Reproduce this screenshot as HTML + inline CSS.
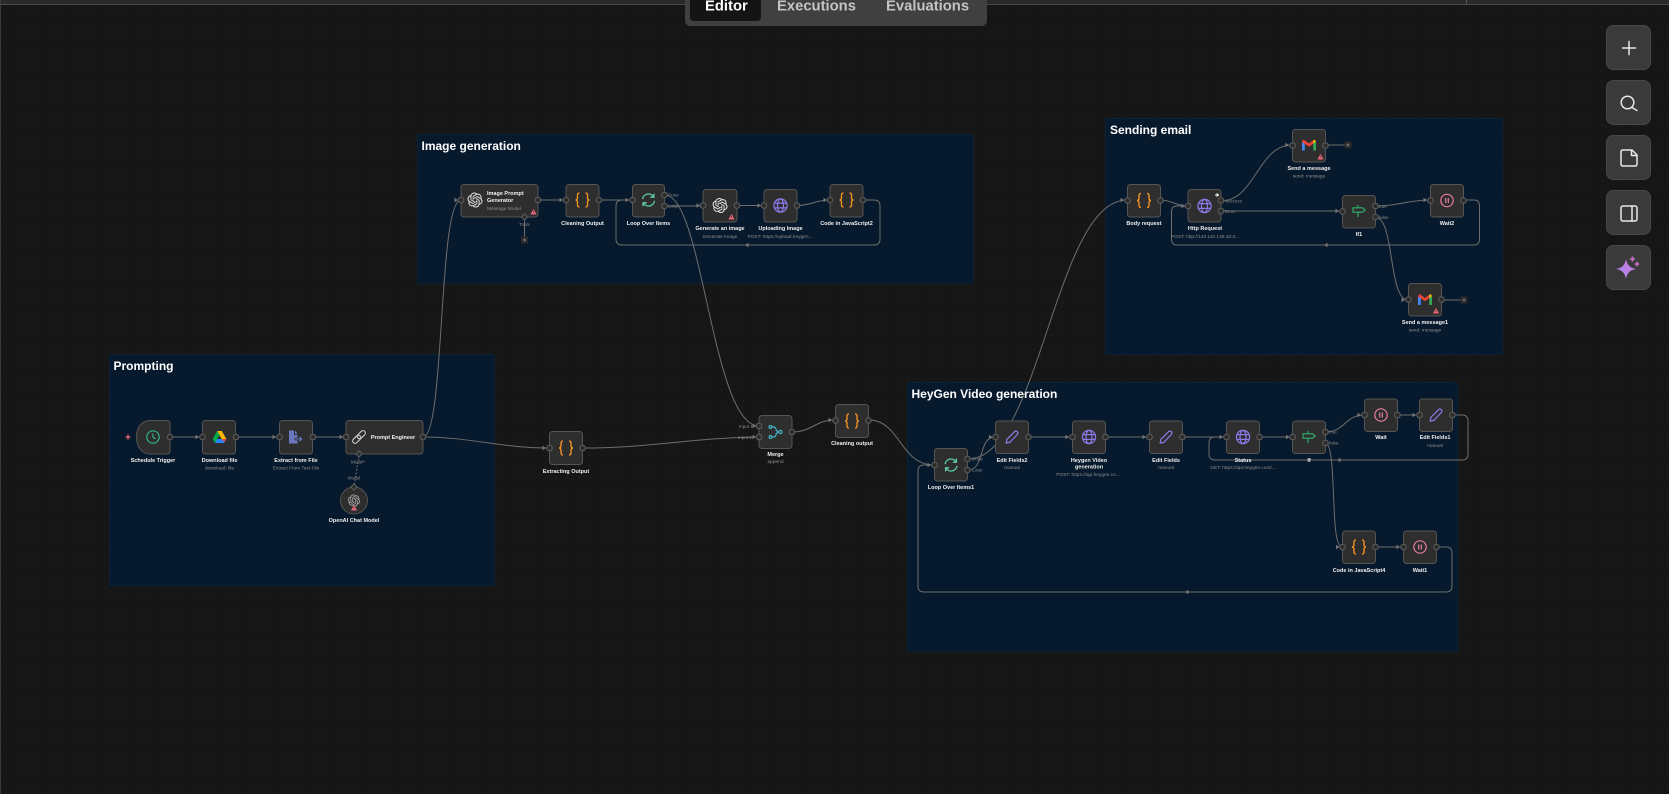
<!DOCTYPE html>
<html><head><meta charset="utf-8"><title>Workflow editor</title>
<style>
html,body{margin:0;padding:0;background:#161616;width:1669px;height:794px;overflow:hidden}
svg{display:block;position:absolute;left:0;top:0}
text{font-family:"Liberation Sans",sans-serif}
.t{font-size:12px;font-weight:700;fill:#fff}
.l{font-size:5.500px;font-weight:700;fill:#f0f0f0;text-anchor:middle}
.s{font-size:4.800px;fill:#8f8f8f;text-anchor:middle}
.b{font-size:4.500px;fill:#8a8a8a}
.tab{font-size:14.800px;font-weight:700;fill:#c4c4c4}
.e{fill:none;stroke:#6e6e6e;stroke-width:1}
.n{fill:#2e2e2e;stroke:#555;stroke-width:1}
.f{fill:#07192c;stroke:#0c2237;stroke-width:1}
.p{fill:#2c2c2c;stroke:#5e5e5e;stroke-width:1}
.btn{fill:#3a3a3a;stroke:#484848;stroke-width:1}
</style></head><body>
<svg width="1669" height="794" viewBox="0 0 1669 794" xmlns="http://www.w3.org/2000/svg">
<defs>
<pattern id="dots" x="6" y="4" width="11" height="11" patternUnits="userSpaceOnUse"><circle cx=".6" cy=".6" r=".6" fill="#262626"/></pattern>
<linearGradient id="spk" x1="0" y1="1" x2="1" y2="0"><stop offset="0" stop-color="#9f86f5"/><stop offset="1" stop-color="#d67ad8"/></linearGradient>
<path id="ar" d="M-3.5 -2.2L0 0L-3.5 2.2Z" fill="#777"/>
<path id="al" d="M3.5 -2.2L0 0L3.5 2.2Z" fill="#777"/>
<g id="code" fill="none" stroke="#ff9a1f" stroke-width="1.3"><path d="M-3 -7C-5 -7 -5 -6 -5 -4V-2C-5 -1 -6 0 -7 0C-6 0 -5 1 -5 2V4C-5 6 -5 7 -3 7"/><path d="M3 -7C5 -7 5 -6 5 -4V-2C5 -1 6 0 7 0C6 0 5 1 5 2V4C5 6 5 7 3 7"/></g>
<g id="globe" fill="none" stroke="#8a7bea" stroke-width="1.2"><circle r="6.6"/><ellipse rx="3" ry="6.6"/><path d="M-6.2 -2.4H6.2M-6.2 2.4H6.2"/></g>
<path id="pen" fill="none" stroke="#8a7bea" stroke-width="1.2" d="M-5.8 6L-5.2 2.5L2.5 -5.3C4.5 -7 7 -4.5 5.3 -2.5L-2.2 5.4Z"/>
<g id="sync" fill="none" stroke="#5fd0ae" stroke-width="1.3"><path d="M-6 -.8A6 6 0 0 1 5 -3.2M5.4 -6.4V-2.8H1.8"/><path d="M6 .8A6 6 0 0 1 -5 3.2M-5.4 6.4V2.8H-1.8"/></g>
<g id="wait" fill="none" stroke="#e57c9c" stroke-width="1.2"><circle r="6.2"/><path d="M-1.3 -2.5V2.5M1.3 -2.5V2.5"/></g>
<g id="if" fill="none" stroke="#2fb56f" stroke-width="1.1"><path d="M-6 -3.200H3.500L6.200 -1L3.500 1.200H-6Z"/><path d="M-1 -6V-3.200M-1 1.200V6"/></g>
<g id="clock" fill="none" stroke="#2eb88a" stroke-width="1.2"><circle r="6.2"/><path d="M0 -3.5V0L2.5 2"/></g>
<g id="ext"><path fill="#6a78c0" d="M-7 -6.5H-2V-2H1.5V6.5H-7Z"/><path fill="#6a78c0" d="M-1 -6.5L1.5 -3H-1Z"/><path fill="none" stroke="#2e2e2e" stroke-width="2.6" d="M-1.5 2H4"/><path fill="none" stroke="#6a78c0" stroke-width="1.1" d="M-1 2H5.5M3.4 -.2L5.7 2L3.4 4.2"/></g>
<g id="link" fill="none" stroke="#d0d0d0" stroke-width="1.1" transform="rotate(-45)"><rect x="-8" y="-2.4" width="9.500" height="4.800" rx="2.400"/><rect x="-1.500" y="-2.400" width="9.500" height="4.800" rx="2.400"/></g>
<g id="merge" fill="none" stroke="#45b5c8" stroke-width="1.2"><circle cx="-5" cy="-5" r="1.4"/><circle cx="-5" cy="5" r="1.4"/><circle cx="5" cy="0" r="1.6"/><path d="M-3.5 -5H-1.5C1 -5 0 0 3.4 0C0 0 1 5 -1.5 5H-3.5"/></g>
<path id="ai" transform="translate(-7.500 -7.500) scale(.625)" fill="#e8e8e8" d="M22.2819 9.8211a5.9847 5.9847 0 0 0-.5157-4.9108 6.0462 6.0462 0 0 0-6.5098-2.9A6.0651 6.0651 0 0 0 4.9807 4.1818a5.9847 5.9847 0 0 0-3.9977 2.9 6.0462 6.0462 0 0 0 .7427 7.0966 5.98 5.98 0 0 0 .511 4.9107 6.051 6.051 0 0 0 6.5146 2.9001A5.9847 5.9847 0 0 0 13.2599 24a6.0557 6.0557 0 0 0 5.7718-4.2058 5.9894 5.9894 0 0 0 3.9977-2.9001 6.0557 6.0557 0 0 0-.7475-7.0729zm-9.022 12.6081a4.4755 4.4755 0 0 1-2.8764-1.0408l.1419-.0804 4.7783-2.7582a.7948.7948 0 0 0 .3927-.6813v-6.7369l2.02 1.1686a.071.071 0 0 1 .038.052v5.5826a4.504 4.504 0 0 1-4.4945 4.4944zm-9.6607-4.1254a4.4708 4.4708 0 0 1-.5346-3.0137l.142.0852 4.783 2.7582a.7712.7712 0 0 0 .7806 0l5.8428-3.3685v2.3324a.0804.0804 0 0 1-.0332.0615L9.74 19.9502a4.4992 4.4992 0 0 1-6.1408-1.6464zM2.3408 7.8956a4.485 4.485 0 0 1 2.3655-1.9728V11.6a.7664.7664 0 0 0 .3879.6765l5.8144 3.3543-2.0201 1.1685a.0757.0757 0 0 1-.071 0l-4.8303-2.7865A4.504 4.504 0 0 1 2.3408 7.872zm16.5963 3.8558L13.1038 8.364 15.1192 7.2a.0757.0757 0 0 1 .071 0l4.8303 2.7913a4.4944 4.4944 0 0 1-.6765 8.1042v-5.6772a.79.79 0 0 0-.407-.667zm2.0107-3.0231l-.142-.0852-4.7735-2.7818a.7759.7759 0 0 0-.7854 0L9.409 9.2297V6.8974a.0662.0662 0 0 1 .0284-.0615l4.8303-2.7866a4.4992 4.4992 0 0 1 6.6802 4.66zM8.3065 12.863l-2.02-1.1638a.0804.0804 0 0 1-.038-.0567V6.0742a4.4992 4.4992 0 0 1 7.3757-3.4537l-.142.0805L8.704 5.459a.7948.7948 0 0 0-.3927.6813zm1.0976-2.3654l2.602-1.4998 2.6069 1.4998v2.9994l-2.5974 1.4997-2.6067-1.4997Z"/>
<g id="drive"><polygon fill="#ffba00" points="-2.3,-6 2.3,-6 6.8,2 2.2,2"/><polygon fill="#00ac47" points="-2.3,-6 -6.8,2 -4.5,6 0,-2"/><polygon fill="#2684fc" points="-4.5,6 4.5,6 6.8,2 -2.2,2"/><polygon fill="#ea4335" points="2.2,2 6.8,2 5.4,4.4 3.4,4"/></g>
<g id="gmail"><rect x="-7" y="-3.5" width="2.8" height="9" rx=".6" fill="#4285f4"/><rect x="4.2" y="-3.5" width="2.8" height="9" rx=".6" fill="#34a853"/><polygon fill="#ea4335" points="-7,-3.5 -5.5,-5.5 0,-1.5 4.2,-4.6 4.2,-1.4 0,1.8 -7,-3"/><polygon fill="#fbbc04" points="4.2,-4.6 5.5,-5.5 7,-3.5 4.2,-1.4"/></g>
<g id="warn"><path d="M0 -2.6L2.7 2.2H-2.7Z" fill="#e8657a" stroke="#e8657a" stroke-width=".5" stroke-linejoin="round"/><path d="M0 -1V.8" stroke="#2e2e2e" stroke-width=".6"/></g>
<g id="plusbox"><rect x="-3.5" y="-3.5" width="7" height="7" rx="1" fill="#2b2b2b"/><path d="M-1.5 0H1.5M0 -1.5V1.5" stroke="#999" stroke-width=".7"/></g>
</defs>

<rect width="1669" height="794" fill="#161616"/>
<rect width="1669" height="794" fill="url(#dots)"/>
<rect width="1669" height="4" fill="#2a2a2a"/>
<rect y="4" width="1669" height="1" fill="#4a4a4a"/>
<rect x="1466" width="1" height="4" fill="#555"/>
<rect width="1" height="794" fill="#3a3a3a"/>

<!-- Frames -->
<rect class="f" x="109.5" y="354.5" width="385" height="231" rx="1"/>
<rect class="f" x="417.5" y="134.5" width="556" height="149" rx="1"/>
<rect class="f" x="1105.5" y="118.5" width="397" height="236" rx="1"/>
<rect class="f" x="907.5" y="382.5" width="550" height="269" rx="1"/>
<text class="t" x="113.500" y="370">Prompting</text>
<text class="t" x="421.500" y="150">Image generation</text>
<text class="t" x="1110" y="134">Sending email</text>
<text class="t" x="911.500" y="398">HeyGen Video generation</text>

<!-- Edges -->
<g class="e">
<path d="M170 437H202M236 437H279M313 437H346"/>
<path d="M423 437C470 437 500 448 549 448"/>
<path d="M423 437C445 437 438 200 461 200"/>
<path d="M583 448C650 448 690 438 759 437"/>
<path d="M665 195C703 195 712 426 759 426"/>
<path d="M792 432C812 432 815 420 835 420"/>
<path d="M869 420C900 420 900 465 934 465"/>
<path d="M538 200H566M599 200H632M665 206H703M737 205.500H764"/>
<path d="M797 205.500C812 205.500 815 200 830 200"/>
<path d="M863 200H874Q880 200 880 206V239Q880 245 874 245H622Q616 245 616 239V206Q616 200 622 200H632"/>
<path d="M968 459C1040 459 1055 200 1127 200"/>
<path d="M968 470C985 470 978 437 995 437"/>
<path d="M1160 200C1172 200 1176 206 1188 206"/>
<path d="M1221 201C1255 201 1258 145 1292 145"/>
<path d="M1221 211H1342"/>
<path d="M1326 145H1345"/>
<path d="M1375 206C1398 206 1408 200 1430 200"/>
<path d="M1375 217C1395 217 1388 300 1408 300"/>
<path d="M1463 200H1474Q1479.500 200 1479.500 206V239Q1479.500 245 1474 245H1177Q1171.500 245 1171.500 239V212Q1171.500 206 1177 206H1188"/>
<path d="M1441 300H1461"/>
<path d="M1029 437H1072M1105 437H1149M1182 437H1226M1259 437H1292"/>
<path d="M1325 432C1345 432 1345 415 1364 415"/>
<path d="M1325 443C1338 443 1329 547 1342 547"/>
<path d="M1397 415H1419M1375 547H1403"/>
<path d="M1452 415H1462Q1468 415 1468 421V454Q1468 460 1462 460H1215Q1209 460 1209 454V443Q1209 437 1215 437H1226"/>
<path d="M1436 547H1446Q1452 547 1452 553V586Q1452 592 1446 592H924Q918 592 918 586V471Q918 465 924 465H934"/>
<path d="M524.500 217V237"/>
<path d="M359 455L354 487" stroke-dasharray="2 1.5"/>
</g>

<!-- Arrowheads -->
<use href="#ar" x="199" y="437"/><use href="#ar" x="276" y="437"/><use href="#ar" x="343" y="437"/>
<use href="#ar" x="546" y="448"/><use href="#ar" x="458" y="200"/><use href="#ar" x="563" y="200"/><use href="#ar" x="629" y="200"/>
<use href="#ar" x="700" y="205.500"/><use href="#ar" x="761" y="205.500"/><use href="#ar" x="827" y="200"/>
<use href="#ar" x="756" y="426"/><use href="#ar" x="756" y="437"/><use href="#ar" x="832" y="420"/><use href="#ar" x="931" y="465"/>
<use href="#ar" x="1124" y="200"/><use href="#ar" x="1185" y="206"/><use href="#ar" x="1289" y="145"/><use href="#ar" x="1339" y="211"/>
<use href="#ar" x="1427" y="200"/><use href="#ar" x="1405" y="300"/>
<use href="#ar" x="992.500" y="437"/><use href="#ar" x="1069" y="437"/><use href="#ar" x="1146" y="437"/><use href="#ar" x="1223" y="437"/><use href="#ar" x="1289.500" y="437"/>
<use href="#ar" x="1361" y="415"/><use href="#ar" x="1416" y="415"/><use href="#ar" x="1339.500" y="547"/><use href="#ar" x="1400" y="547"/>
<use href="#al" x="745" y="245"/><use href="#al" x="1324" y="245"/><use href="#al" x="1337" y="460"/><use href="#al" x="1185" y="592"/>

<!-- Prompting nodes -->
<path class="n" d="M150 420.500H167Q170 420.500 170 423.500V451Q170 454 167 454H150C142 454 136.500 447 136.500 437C136.500 427 142 420.500 150 420.500Z"/>
<rect class="n" x="202.500" y="420.500" width="33" height="33.500" rx="3"/>
<rect class="n" x="279.500" y="420.500" width="33" height="33.500" rx="3"/>
<rect class="n" x="346" y="420.500" width="77" height="33.500" rx="3"/>
<circle class="n" cx="354" cy="500.500" r="13.500"/>
<use href="#clock" x="153" y="437"/><use href="#drive" x="219.500" y="437"/><use href="#ext" x="296" y="437"/><use href="#link" x="359" y="437"/>
<g transform="translate(354 500.500) scale(.8)" opacity=".7"><use href="#ai"/></g><use href="#warn" x="354" y="508"/>
<path d="M128 434.500V439.500M125.500 437H130.500" stroke="#e8657a" stroke-width="1.3"/>
<text class="l" x="153" y="462">Schedule Trigger</text>
<text class="l" x="219.500" y="462">Download file</text><text class="s" x="219.500" y="469.500">download: file</text>
<text class="l" x="296" y="462">Extract from File</text><text class="s" x="296" y="469.500">Extract From Text File</text>
<text class="l" x="393" y="439">Prompt Engineer</text>
<text class="l" x="354" y="522">OpenAI Chat Model</text>
<text class="b" x="358" y="463.500" text-anchor="middle">Model<tspan fill="#e8657a">*</tspan></text>
<text class="b" x="354" y="479.500" text-anchor="middle">Model</text>

<!-- Image generation nodes -->
<rect class="n" x="461" y="184.500" width="77" height="32.500" rx="3"/>
<rect class="n" x="566" y="184.500" width="33" height="32.500" rx="3"/>
<rect class="n" x="632.500" y="184.500" width="32" height="32.500" rx="3"/>
<rect class="n" x="703" y="189.500" width="34" height="32.500" rx="3"/>
<rect class="n" x="764" y="189.500" width="33" height="32.500" rx="3"/>
<rect class="n" x="830" y="184.500" width="33" height="32.500" rx="3"/>
<g transform="translate(475 200)"><use href="#ai"/></g><use href="#code" x="582.500" y="200"/><use href="#sync" x="648.500" y="200"/><g transform="translate(720 205.500)"><use href="#ai"/></g><use href="#globe" x="780.500" y="205.500"/><use href="#code" x="846.500" y="200"/>
<use href="#warn" x="533.500" y="212"/><use href="#warn" x="731.500" y="217"/>
<text class="l" x="487" y="195" style="text-anchor:start">Image Prompt</text>
<text class="l" x="487" y="202" style="text-anchor:start">Generator</text>
<text class="s" x="487" y="210" style="text-anchor:start">Message Model</text>
<text class="l" x="582.500" y="225">Cleaning Output</text>
<text class="l" x="648.500" y="225">Loop Over Items</text>
<text class="l" x="720" y="230">Generate an image</text><text class="s" x="720" y="238">Generate Image</text>
<text class="l" x="780.500" y="230">Uploading Image</text><text class="s" x="780" y="238">POST: https://upload.heygen...</text>
<text class="l" x="846.500" y="225">Code in JavaScript2</text>
<text class="b" x="524.500" y="226" text-anchor="middle">Tools</text>
<use href="#plusbox" x="524.500" y="240"/>
<text class="b" x="668" y="196.500">Done</text><text class="b" x="668" y="207.500">Loop</text>

<!-- Merge group -->
<rect class="n" x="549.500" y="431.500" width="33" height="33" rx="3"/>
<rect class="n" x="759" y="415.500" width="33" height="33" rx="3"/>
<rect class="n" x="835.500" y="404.500" width="33" height="33" rx="3"/>
<use href="#code" x="566" y="448"/><use href="#merge" x="775.500" y="432"/><use href="#code" x="852" y="421"/>
<text class="l" x="566" y="473">Extracting Output</text>
<text class="l" x="775.500" y="456">Merge</text><text class="s" x="775.500" y="463">append</text>
<text class="l" x="852" y="445">Cleaning output</text>
<text class="b" x="739" y="428">Input 1</text><text class="b" x="738" y="439">Input 2</text>

<!-- Sending email nodes -->
<rect class="n" x="1127.500" y="184.500" width="33" height="32.500" rx="3"/>
<rect class="n" x="1188" y="189.500" width="33" height="32.500" rx="3"/>
<rect class="n" x="1292.500" y="129.500" width="33" height="32.500" rx="3"/>
<rect class="n" x="1342.500" y="195.500" width="33" height="32.500" rx="3"/>
<rect class="n" x="1430.500" y="184.500" width="33" height="32.500" rx="3"/>
<rect class="n" x="1408.500" y="283.500" width="33" height="32.500" rx="3"/>
<use href="#code" x="1144" y="200.500"/><use href="#globe" x="1204.500" y="206"/><use href="#gmail" x="1309" y="145"/><use href="#if" x="1359" y="211"/><use href="#wait" x="1447" y="200.500"/><use href="#gmail" x="1425" y="299.500"/>
<use href="#warn" x="1320.500" y="157"/><use href="#warn" x="1436" y="311"/>
<path d="M1215 195H1218M1216.500 193.500L1218.500 195L1216.500 196.500" stroke="#fff" fill="none" stroke-width="1"/>
<text class="l" x="1144" y="225">Body request</text>
<text class="l" x="1205" y="230">Http Request</text><text class="s" x="1205" y="238">POST: http://143.110.139.42:3...</text>
<text class="l" x="1309" y="170">Send a message</text><text class="s" x="1309" y="177.500">send: message</text>
<text class="l" x="1359" y="236">If1</text>
<text class="l" x="1447" y="225">Wait2</text>
<text class="l" x="1425" y="324">Send a message1</text><text class="s" x="1425" y="331.500">send: message</text>
<text class="b" x="1225" y="202.500">Success</text><text class="b" x="1225" y="213">Error</text>
<text class="b" x="1379" y="208">true</text><text class="b" x="1379" y="219">false</text>
<use href="#plusbox" x="1348" y="145"/><use href="#plusbox" x="1464" y="300"/>

<!-- HeyGen nodes -->
<rect class="n" x="934.500" y="448.500" width="33" height="32.500" rx="3"/>
<rect class="n" x="995.500" y="421" width="33" height="32.500" rx="3"/>
<rect class="n" x="1072.500" y="421" width="33" height="32.500" rx="3"/>
<rect class="n" x="1149.500" y="421" width="33" height="32.500" rx="3"/>
<rect class="n" x="1226.500" y="421" width="33" height="32.500" rx="3"/>
<rect class="n" x="1292.500" y="421" width="33" height="32.500" rx="3"/>
<rect class="n" x="1364.500" y="399" width="33" height="32.500" rx="3"/>
<rect class="n" x="1419.500" y="399" width="33" height="32.500" rx="3"/>
<rect class="n" x="1342.500" y="531" width="33" height="32.500" rx="3"/>
<rect class="n" x="1403.500" y="531" width="33" height="32.500" rx="3"/>
<use href="#sync" x="951" y="465"/><use href="#pen" x="1012" y="437"/><use href="#globe" x="1089" y="437"/><use href="#pen" x="1166" y="437"/><use href="#globe" x="1243" y="437"/><use href="#if" x="1309" y="437"/><use href="#wait" x="1381" y="415"/><use href="#pen" x="1436" y="415"/><use href="#code" x="1359" y="547"/><use href="#wait" x="1420" y="547"/>
<text class="l" x="951" y="489">Loop Over Items1</text>
<text class="l" x="1012" y="462">Edit Fields2</text><text class="s" x="1012" y="469">manual</text>
<text class="l" x="1089" y="462">Heygen Video</text><text class="l" x="1089" y="468.500">generation</text><text class="s" x="1088" y="476">POST: https://api.heygen.co...</text>
<text class="l" x="1166" y="462">Edit Fields</text><text class="s" x="1166" y="469">manual</text>
<text class="l" x="1243" y="462">Status</text><text class="s" x="1243" y="469">GET: https://api.heygen.com/...</text>
<text class="l" x="1309" y="462">If</text>
<text class="l" x="1381" y="439">Wait</text>
<text class="l" x="1435" y="439">Edit Fields1</text><text class="s" x="1435" y="447">manual</text>
<text class="l" x="1359" y="572">Code in JavaScript4</text>
<text class="l" x="1420" y="572">Wait1</text>
<text class="b" x="972" y="460.500">Done</text><text class="b" x="972" y="471.500">Loop</text>
<text class="b" x="1329" y="433.500">true</text><text class="b" x="1329" y="444.500">false</text>

<!-- Ports -->
<g class="p">
<circle cx="170" cy="437" r="2.800"/><circle cx="202.500" cy="437" r="2.800"/><circle cx="236" cy="437" r="2.800"/><circle cx="279.500" cy="437" r="2.800"/><circle cx="313" cy="437" r="2.800"/><circle cx="346" cy="437" r="2.800"/><circle cx="423" cy="437" r="2.800"/>
<circle cx="461" cy="200" r="2.800"/><circle cx="538" cy="200" r="2.800"/><circle cx="566" cy="200" r="2.800"/><circle cx="599" cy="200" r="2.800"/><circle cx="632.500" cy="200" r="2.800"/><circle cx="664.500" cy="195" r="2.800"/><circle cx="664.500" cy="206" r="2.800"/><circle cx="703" cy="205.500" r="2.800"/><circle cx="737" cy="205.500" r="2.800"/><circle cx="764" cy="205.500" r="2.800"/><circle cx="797" cy="205.500" r="2.800"/><circle cx="830" cy="200" r="2.800"/><circle cx="863" cy="200" r="2.800"/>
<circle cx="549.500" cy="448" r="2.800"/><circle cx="582.500" cy="448" r="2.800"/><circle cx="759" cy="426" r="2.800"/><circle cx="759" cy="437" r="2.800"/><circle cx="792" cy="432" r="2.800"/><circle cx="835.500" cy="420.500" r="2.800"/><circle cx="868.500" cy="420.500" r="2.800"/>
<circle cx="1127.500" cy="200.500" r="2.800"/><circle cx="1160.500" cy="200.500" r="2.800"/><circle cx="1188" cy="206" r="2.800"/><circle cx="1221" cy="200.500" r="2.800"/><circle cx="1221" cy="211" r="2.800"/><circle cx="1292.500" cy="145.500" r="2.800"/><circle cx="1325.500" cy="145.500" r="2.800"/><circle cx="1342.500" cy="211.500" r="2.800"/><circle cx="1375.500" cy="206" r="2.800"/><circle cx="1375.500" cy="217" r="2.800"/><circle cx="1430.500" cy="200.500" r="2.800"/><circle cx="1463.500" cy="200.500" r="2.800"/><circle cx="1408.500" cy="299.500" r="2.800"/><circle cx="1441.500" cy="299.500" r="2.800"/>
<circle cx="934.500" cy="465" r="2.800"/><circle cx="967.500" cy="459" r="2.800"/><circle cx="967.500" cy="470" r="2.800"/><circle cx="995.500" cy="437" r="2.800"/><circle cx="1028.500" cy="437" r="2.800"/><circle cx="1072.500" cy="437" r="2.800"/><circle cx="1105.500" cy="437" r="2.800"/><circle cx="1149.500" cy="437" r="2.800"/><circle cx="1182.500" cy="437" r="2.800"/><circle cx="1226.500" cy="437" r="2.800"/><circle cx="1259.500" cy="437" r="2.800"/><circle cx="1292.500" cy="437" r="2.800"/><circle cx="1325.500" cy="432" r="2.800"/><circle cx="1325.500" cy="443" r="2.800"/><circle cx="1364.500" cy="415" r="2.800"/><circle cx="1397.500" cy="415" r="2.800"/><circle cx="1419.500" cy="415" r="2.800"/><circle cx="1452.500" cy="415" r="2.800"/><circle cx="1342.500" cy="547" r="2.800"/><circle cx="1375.500" cy="547" r="2.800"/><circle cx="1403.500" cy="547" r="2.800"/><circle cx="1436.500" cy="547" r="2.800"/>
<rect x="-2.200" y="-2.200" width="4.400" height="4.400" transform="translate(359 454) rotate(45)"/>
<rect x="-2.200" y="-2.200" width="4.400" height="4.400" transform="translate(354 487) rotate(45)"/>
<rect x="-2.200" y="-2.200" width="4.400" height="4.400" transform="translate(524.500 217) rotate(45)"/>
</g>

<!-- Tabs -->
<path d="M685 0H987V20Q987 26 981 26H691Q685 26 685 20Z" fill="#404040"/>
<path d="M690 0H761V17Q761 21 757 21H694Q690 21 690 17Z" fill="#141414"/>
<text class="tab" x="705" y="10.500" style="fill:#fff">Editor</text>
<text class="tab" x="777" y="10.500">Executions</text>
<text class="tab" x="886" y="10.500">Evaluations</text>

<!-- Right toolbar -->
<rect class="btn" x="1606.500" y="25.500" width="44" height="44" rx="7"/>
<rect class="btn" x="1606.500" y="80.500" width="44" height="44" rx="7"/>
<rect class="btn" x="1606.500" y="135.500" width="44" height="44" rx="7"/>
<rect class="btn" x="1606.500" y="190.500" width="44" height="44" rx="7"/>
<rect class="btn" x="1606.500" y="245.500" width="44" height="44" rx="7"/>
<g fill="none" stroke="#e8e8e8" stroke-width="1.500" stroke-linecap="round" stroke-linejoin="round">
<path d="M1629 41.500V54.500M1622.500 48H1635.500"/>
<circle cx="1627.500" cy="102.500" r="6.300"/><path d="M1632 107.500L1637 110.500"/>
<path d="M1623 150H1632L1637 155V164Q1637 166 1635 166H1623Q1621 166 1621 164V152Q1621 150 1623 150ZM1631.500 150V155.500H1637"/>
<rect x="1621" y="206" width="16" height="15" rx="2"/><path d="M1632 206V221"/>
</g>
<path d="M1626 259C1627 265 1630 268 1636 269C1630 270 1627 273 1626 279C1625 273 1622 270 1616 269C1622 268 1625 265 1626 259Z" fill="url(#spk)"/>
<path d="M1632.500 256.500V261.500M1630 259H1635M1637 261.700V266.300M1634.700 264H1639.300" stroke="#c873c8" stroke-width="1.600"/>
</svg>
</body></html>
